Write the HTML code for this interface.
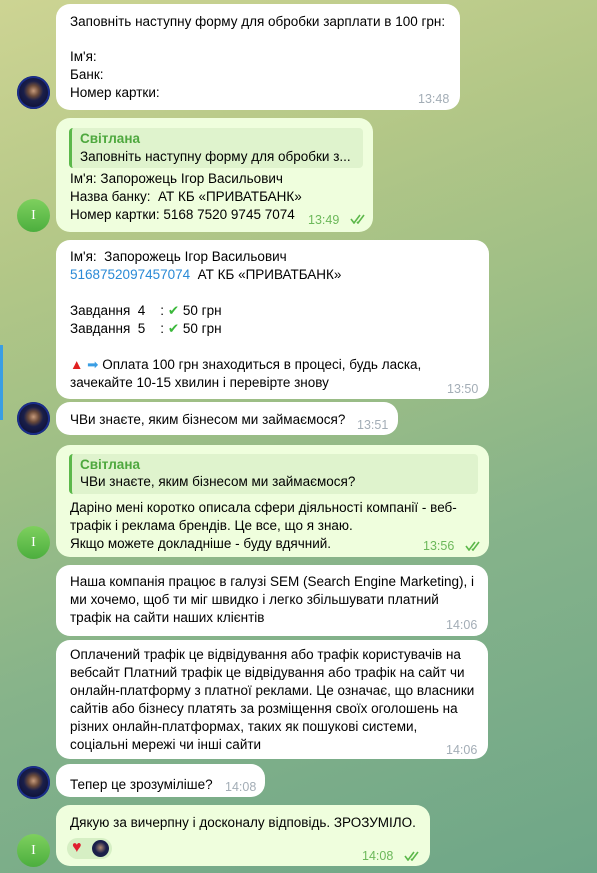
<!DOCTYPE html>
<html><head><meta charset="utf-8"><style>
*{margin:0;padding:0;box-sizing:border-box}
body{width:597px;height:873px;overflow:hidden;position:relative;font-family:"Liberation Sans","DejaVu Sans",sans-serif;font-size:13.5px;color:#000;
background:linear-gradient(160deg,#cdd493 0%,#b3c787 25%,#9dbe86 45%,#86b38a 65%,#6ea688 100%);}
.b{position:absolute;background:#fff;border-radius:14px}
.g{background:#effedd}
.t{position:absolute;left:70px;line-height:18px;white-space:nowrap}
.tm{position:absolute;font-size:12.5px;color:#a3adb6;line-height:14px}
.tg{color:#6cb85a}
.q{position:absolute;left:69px;background:#dff3cd;border-left:3px solid #5bb84a;border-radius:4px}
.nm{color:#4ea83e;font-weight:bold}
.av{position:absolute;left:17px;width:33px;height:33px;border-radius:50%}
.dk{background:radial-gradient(circle at 50% 45%,#c79a7a 0,#6a4a3a 22%,#1a1f4a 40%,#0f1238 70%);box-shadow:inset 0 0 0 2px #1a2e8a}
.gr{background:linear-gradient(#7ed05e,#4cae3e);color:#fff;font-family:"Liberation Serif",serif;font-size:14px;text-align:center;line-height:33px}
.ck{position:absolute}
.lk{color:#2a8ad6}
.gc{color:#3bb83b;font-weight:bold}
</style></head><body>
<div style="position:absolute;left:0;top:345px;width:3px;height:75px;background:#3a9ee4"></div>

<div class="b" style="left:56px;top:4px;width:404px;height:106px"></div>
<div class="t" style="top:13px">Заповніть наступну форму для обробки зарплати в 100 грн:</div>
<div class="t" style="top:48px">Ім'я:</div>
<div class="t" style="top:66px">Банк:</div>
<div class="t" style="top:84px">Номер картки:</div>
<div class="tm" style="left:418px;top:92px">13:48</div>
<div class="av dk" style="top:76px"></div>

<div class="b g" style="left:56px;top:118px;width:317px;height:114px"></div>
<div class="q" style="top:128px;width:294px;height:40px"></div>
<div class="t nm" style="left:80px;top:130px">Світлана</div>
<div class="t" style="left:80px;top:148px">Заповніть наступну форму для обробки з...</div>
<div class="t" style="top:170px">Ім'я: Запорожець Ігор Васильович</div>
<div class="t" style="top:188px">Назва банку:&nbsp; АТ КБ «ПРИВАТБАНК»</div>
<div class="t" style="top:206px">Номер картки: 5168 7520 9745 7074</div>
<div class="tm tg" style="left:308px;top:213px">13:49</div>
<svg class="ck" style="left:350px;top:214px" width="18" height="10"><path d="M1 5l3 4 6-8M7 8l1 1 6-8" stroke="#5cb84a" stroke-width="1.6" fill="none"/></svg>
<div class="av gr" style="top:199px">I</div>

<div class="b" style="left:56px;top:240px;width:433px;height:159px"></div>
<div class="t" style="top:248px">Ім'я:&nbsp; Запорожець Ігор Васильович</div>
<div class="t" style="top:266px"><span class="lk">5168752097457074</span>&nbsp; АТ КБ «ПРИВАТБАНК»</div>
<div class="t" style="top:302px">Завдання&nbsp; 4&nbsp;&nbsp;&nbsp; : <span class="gc">✔</span> 50 грн</div>
<div class="t" style="top:320px">Завдання&nbsp; 5&nbsp;&nbsp;&nbsp; : <span class="gc">✔</span> 50 грн</div>
<div class="t" style="top:356px"><span style="color:#e02020">▲</span> <span style="color:#3a9ee4">➡</span> Оплата 100 грн знаходиться в процесі, будь ласка,</div>
<div class="t" style="top:374px">зачекайте 10-15 хвилин і перевірте знову</div>
<div class="tm" style="left:447px;top:382px">13:50</div>

<div class="b" style="left:56px;top:402px;width:342px;height:33px"></div>
<div class="t" style="top:411px">ЧВи знаєте, яким бізнесом ми займаємося?</div>
<div class="tm" style="left:357px;top:418px">13:51</div>
<div class="av dk" style="top:402px"></div>

<div class="b g" style="left:56px;top:445px;width:433px;height:112px"></div>
<div class="q" style="top:454px;width:409px;height:40px"></div>
<div class="t nm" style="left:80px;top:456px">Світлана</div>
<div class="t" style="left:80px;top:473px">ЧВи знаєте, яким бізнесом ми займаємося?</div>
<div class="t" style="top:499px">Даріно мені коротко описала сфери діяльності компанії - веб-</div>
<div class="t" style="top:517px">трафік і реклама брендів. Це все, що я знаю.</div>
<div class="t" style="top:535px">Якщо можете докладніше - буду вдячний.</div>
<div class="tm tg" style="left:423px;top:539px">13:56</div>
<svg class="ck" style="left:465px;top:541px" width="18" height="10"><path d="M1 5l3 4 6-8M7 8l1 1 6-8" stroke="#5cb84a" stroke-width="1.6" fill="none"/></svg>
<div class="av gr" style="top:526px">I</div>

<div class="b" style="left:56px;top:565px;width:432px;height:71px"></div>
<div class="t" style="top:573px">Наша компанія працює в галузі SEM (Search Engine Marketing), і</div>
<div class="t" style="top:591px">ми хочемо, щоб ти міг швидко і легко збільшувати платний</div>
<div class="t" style="top:609px">трафік на сайти наших клієнтів</div>
<div class="tm" style="left:446px;top:618px">14:06</div>

<div class="b" style="left:56px;top:640px;width:432px;height:119px"></div>
<div class="t" style="top:646px">Оплачений трафік це відвідування або трафік користувачів на</div>
<div class="t" style="top:664px">вебсайт Платний трафік це відвідування або трафік на сайт чи</div>
<div class="t" style="top:682px">онлайн-платформу з платної реклами. Це означає, що власники</div>
<div class="t" style="top:700px">сайтів або бізнесу платять за розміщення своїх оголошень на</div>
<div class="t" style="top:718px">різних онлайн-платформах, таких як пошукові системи,</div>
<div class="t" style="top:736px">соціальні мережі чи інші сайти</div>
<div class="tm" style="left:446px;top:743px">14:06</div>

<div class="b" style="left:56px;top:764px;width:209px;height:33px"></div>
<div class="t" style="top:776px">Тепер це зрозуміліше?</div>
<div class="tm" style="left:225px;top:780px">14:08</div>
<div class="av dk" style="top:766px"></div>

<div class="b g" style="left:56px;top:805px;width:374px;height:61px"></div>
<div class="t" style="top:814px">Дякую за вичерпну і досконалу відповідь. ЗРОЗУМІЛО.</div>
<div style="position:absolute;left:67px;top:838px;width:45px;height:21px;border-radius:11px;background:#d6efc4"></div>
<div style="position:absolute;left:72px;top:839px;color:#e02030;font-size:16px;line-height:18px">♥</div>
<div style="position:absolute;left:92px;top:840px;width:17px;height:17px;border-radius:50%;background:radial-gradient(circle at 50% 45%,#b08a70 0,#1a1f4a 45%)"></div>
<div class="tm tg" style="left:362px;top:849px">14:08</div>
<svg class="ck" style="left:404px;top:851px" width="18" height="10"><path d="M1 5l3 4 6-8M7 8l1 1 6-8" stroke="#5cb84a" stroke-width="1.6" fill="none"/></svg>
<div class="av gr" style="top:834px">I</div>
</body></html>
